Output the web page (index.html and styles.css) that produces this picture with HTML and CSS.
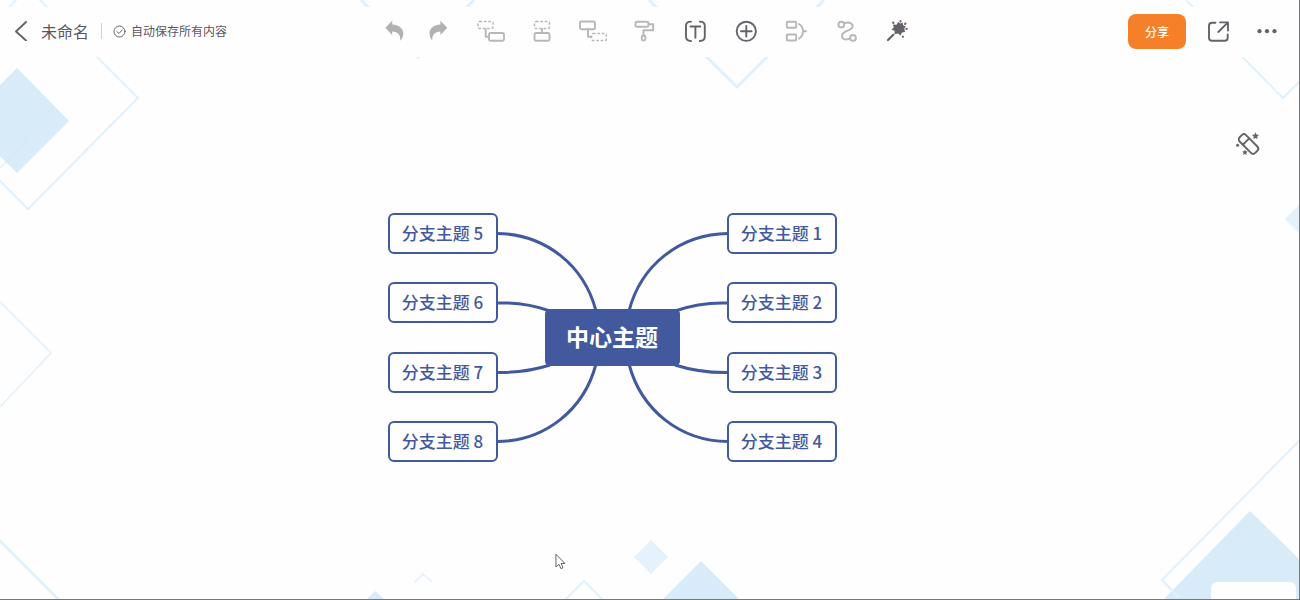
FILE: index.html
```html
<!DOCTYPE html>
<html lang="zh-CN">
<head>
<meta charset="utf-8">
<title>未命名</title>
<link rel="stylesheet" href="styles.css">
</head>
<body>
<div class="app">
  <svg class="backdrop" viewBox="0 0 1300 600" preserveAspectRatio="xMidYMid slice" aria-hidden="true">
    <g class="fill-strong">
      <path d="M17 68L69 121L17 173L-36 121Z"/>
      <path d="M1250 511L1300 560V600H1163Z"/>
      <path d="M701 561L740 600H662Z"/>
      <path d="M375 591L385 600H366Z"/>
    </g>
    <g class="fill-soft">
      <path d="M651 540L668 557L651 574L634 557Z"/>
      <path d="M1285 219L1300 204V234Z"/>
    </g>
    <g class="line">
      <path d="M-15 31L28 -12L138 98L28 209L-15 166"/>
      <path d="M1186 0L1283 98L1300 81"/>
      <path d="M1300 440L1162 580L1178 597"/>
      <path d="M564 601L584 581L604 601"/>
    </g>
    <g class="line thick">
      <path d="M649 0L737 87L824 0"/>
      <path d="M474 0L418 57L361 0"/>
      <path d="M-3 538L60 601"/>
    </g>
    <g class="line thin">
      <path d="M0 302L51 353L0 407"/>
      <path d="M415 582L423 574L432 582"/>
      <path d="M0 168L5 163"/>
    </g>
    <path class="line thin faint" d="M0 113L27 140L5 163"/>
  </svg>

  <header class="topbar">
    <div class="doc">
      <button class="back" aria-label="返回"><svg width="14" height="20" viewBox="0 0 14 20"><path class="s dark" d="M12 1L2 10.5L12 19.5"/></svg></button>
      <h1 class="title">未命名</h1>
      <span class="divider"></span>
      <p class="saved"><svg width="13" height="13" viewBox="0 0 13 13"><circle class="s dark fine" cx="6.500" cy="6.500" r="5.500"/><path class="s dark fine" d="M3.800 6.500L5.900 8.500L9.300 4.900"/></svg>自动保存所有内容</p>
    </div>

    <nav class="tools">
      <div class="history">
        <button class="tool" aria-label="撤销"><svg width="28" height="28" viewBox="0 0 28 28"><path class="f" d="M5.300 10.800L12.200 3.800V7.600C19.500 8 23.300 12 23.300 16.500C23.300 19.500 21.900 22 20.300 23.700C20.600 18 18 15 12.200 14.600V18Z"/></svg></button>
        <button class="tool" aria-label="重做"><svg width="28" height="28" viewBox="0 0 28 28"><path class="f" d="M23.300 10.800L16.400 3.800V7.600C9.100 8 5.500 12 5.500 16.500C5.500 19.500 6.700 22 8.300 23.700C8 18 10.600 15 16.400 14.600V18Z"/></svg></button>
      </div>
      <div class="actions">
        <button class="tool" aria-label="上级主题"><svg width="28" height="28" viewBox="0 0 28 28"><rect class="s dash" x="1" y="4.500" width="15" height="7" rx="1.500"/><path class="s" d="M8.700 12V19.800H12"/><rect class="s" x="12" y="16" width="15" height="7.700" rx="1.500"/></svg></button>
        <button class="tool" aria-label="父主题"><svg width="28" height="28" viewBox="0 0 28 28"><rect class="s dash" x="6.500" y="4.500" width="15" height="7" rx="1.500"/><path class="s" d="M14 12V16"/><rect class="s" x="6.500" y="16" width="15" height="7.700" rx="1.500"/></svg></button>
        <button class="tool" aria-label="子主题"><svg width="28" height="28" viewBox="0 0 28 28"><rect class="s" x="1" y="4.500" width="15" height="7.700" rx="1.500"/><path class="s" d="M9 12V19.800H12"/><rect class="s dash" x="12.500" y="16.500" width="15" height="7" rx="1.500"/></svg></button>
        <button class="tool" aria-label="格式刷"><svg width="28" height="28" viewBox="0 0 28 28"><rect class="s" x="5.500" y="4.700" width="13" height="5" rx="1.500"/><path class="s" d="M18.500 7.200H23.200V13.300H13.500V18.500"/><rect class="s" x="11.800" y="18.500" width="3.600" height="5" rx="1.500"/></svg></button>
        <button class="tool" aria-label="文本"><svg width="28" height="28" viewBox="0 0 28 28"><path class="s dark" d="M10 4.600Q5 4.600 5 9V19.500Q5 24 10 24M18.800 4.600Q23.800 4.600 23.800 9V19.500Q23.800 24 18.800 24M9.500 9.500H19.300M14.400 9.500V20.700"/></svg></button>
        <button class="tool" aria-label="插入"><svg width="28" height="28" viewBox="0 0 28 28"><circle class="s dark" cx="14.300" cy="14.300" r="9.600"/><path class="s dark" d="M9 14.300H19.600M14.300 9V19.600"/></svg></button>
        <button class="tool" aria-label="概要"><svg width="28" height="28" viewBox="0 0 28 28"><rect class="s" x="3.800" y="4.800" width="9.400" height="5.900" rx="1"/><rect class="s" x="3.800" y="17.500" width="9.400" height="6" rx="1"/><path class="s" d="M16 7Q20 9.500 20 14.300Q20 19 16 21.800M20 14.300H23"/></svg></button>
        <button class="tool" aria-label="关系线"><svg width="28" height="28" viewBox="0 0 28 28"><circle class="s" cx="7.300" cy="7.600" r="2.900"/><circle class="s" cx="19" cy="20.900" r="2.900"/><path class="s" d="M10 6.300C15 4.200 19.300 6.400 18.500 10C17.500 14 8.800 13.500 8 18.300C7.600 22.300 11.500 23.500 16 21.400"/></svg></button>
        <button class="tool" aria-label="美化"><svg width="28" height="28" viewBox="0 0 28 28"><path class="s dark bold" d="M3 23L8.300 17.700"/><path class="f dark" d="M13.300 4.800L15 6.500L17.500 5.500L18.200 8.200L20.800 9.500L19.200 12L20.200 15L17 15.500L15.500 18.500L13 16.500L9.500 17.200L9.700 14L6.500 12.500L8.800 10.500L8 7.500L11.500 7.800Z"/><path class="s dark" d="M8 5.500L8.500 6M15.500 3.900V4.500M20.500 6.500L20 7M21.300 12L21.800 11.800M17.800 19.400L18 19.900"/></svg></button>
      </div>
    </nav>

    <div class="side">
      <button class="share">分享</button>
      <button class="tool" aria-label="导出"><svg width="28" height="28" viewBox="0 0 28 28"><path class="s dark" d="M11.500 5.700H8Q5 5.700 5 8.700V20.800Q5 23.800 8 23.800H20.700Q23.700 23.800 23.700 20.800V17.500M16 5.400H24V13.500M24 5.400L14.300 15"/></svg></button>
      <button class="tool" aria-label="更多"><svg width="28" height="28" viewBox="0 0 28 28"><circle class="f dark" cx="9.500" cy="14.200" r="2.100"/><circle class="f dark" cx="17" cy="14.200" r="2.100"/><circle class="f dark" cx="24.500" cy="14.200" r="2.100"/></svg></button>
    </div>
  </header>

  <main class="canvas">
    <div class="map">
      <svg class="edges" width="449" height="249" viewBox="0 0 449 249" aria-hidden="true">
        <path d="M109 20.500C157 21 196 52 208 98M109 90Q137 89 162 98M109 159.500Q137 160 162 152M109 228.500C157 228 196 197 208 151"/>
        <path d="M340 20.500C292 21 253 52 241 98M340 90Q312 89 287 98M340 159.500Q312 160 287 152M340 228.500C292 228 253 197 241 151"/>
      </svg>
      <div class="node left r1">分支主题 5</div>
      <div class="node left r2">分支主题 6</div>
      <div class="node left r3">分支主题 7</div>
      <div class="node left r4">分支主题 8</div>
      <div class="node right r1">分支主题 1</div>
      <div class="node right r2">分支主题 2</div>
      <div class="node right r3">分支主题 3</div>
      <div class="node right r4">分支主题 4</div>
      <div class="root">中心主题</div>
    </div>
    <button class="beautify" aria-label="风格"><svg width="28" height="28" viewBox="0 0 28 28"><g transform="rotate(-45 14.500 14)"><rect class="s dark" x="10" y="3" width="9" height="22" rx="3"/><path class="s dark" d="M10 10.500H19"/></g><path class="f dark" d="M21.500 2.300L22.500 4.500L25 4.900L23.200 6.600L23.600 9L21.500 7.900L19.300 9L19.700 6.600L18 4.900L20.500 4.500ZM11 19.500L11.800 21.200L13.700 21.500L12.300 22.900L12.600 24.900L11 24L9.300 24.900L9.600 22.900L8.200 21.500L10.200 21.200Z"/><circle class="f dark" cx="3.600" cy="15.300" r="1.500"/></svg></button>
    <div class="dock"></div>
    <svg class="cursor" width="11" height="17" viewBox="0 0 12 18" aria-hidden="true"><path d="M1 1V15L4.200 12L6.500 16.800L8.700 15.800L6.700 11.200H10.800Z"/></svg>
  </main>
</div>
</body>
</html>
```
FILE: styles.css
```css
* { box-sizing: border-box; }

body {
  margin: 0;
  font-family: "Noto Sans CJK SC", sans-serif;
  color: #5a5560;
}

button {
  display: block;
  padding: 0;
  border: 0;
  background: none;
  font: inherit;
  cursor: pointer;
}

svg { display: block; }

.app {
  position: relative;
  display: flex;
  flex-direction: column;
  min-height: 100vh;
  overflow: hidden;
  padding-top: 7px;
  background: #fefefe;
  border-right: 1px solid #77777a;
  border-bottom: 1px solid #77777a;
}

/* decorative diamonds */
.backdrop {
  position: absolute;
  top: 0;
  left: 0;
  width: 100vw;
  height: 100vh;
}
.fill-strong { fill: #d8ebf9; }
.fill-soft { fill: #e3f2fc; }
.line { fill: none; stroke: #e0f1fc; stroke-width: 2; }
.thick { stroke-width: 3; }
.thin { stroke-width: 1.5; }
.faint { stroke: #d3e8f7; stroke-width: 1; }

/* top bar */
.topbar {
  position: relative;
  display: grid;
  grid-template-columns: 1fr auto 1fr;
  align-items: center;
  height: 50px;
  padding: 0 21px 2px 14px;
  background: #fefefe;
}

.doc { display: flex; align-items: center; }
.title {
  margin: 0 12px 0 13px;
  font-size: 16px;
  font-weight: 400;
  line-height: 24px;
}
.divider { width: 1px; height: 16px; background: #d5d3d7; }
.saved {
  display: flex;
  align-items: center;
  gap: 5px;
  margin: 0 0 0 11px;
  font-size: 12px;
  line-height: 18px;
  white-space: nowrap;
}

.tools { display: flex; gap: 25px; }
.history { display: flex; gap: 16px; }
.actions { display: flex; gap: 23px; }

.s {
  fill: none;
  stroke: #b9b6bb;
  stroke-width: 1.9;
  stroke-linecap: round;
  stroke-linejoin: round;
}
.f { fill: #b3b0b4; }
.dash { stroke-width: 1.5; stroke-dasharray: 2.6 1.8; stroke-linecap: butt; }
.s.dark { stroke: #67626a; }
.f.dark { fill: #67626a; }
.fine { stroke-width: 1; }
.bold { stroke-width: 2.2; }

.side {
  display: flex;
  align-items: center;
  justify-content: flex-end;
  gap: 18px;
}
.share {
  width: 58px;
  height: 35px;
  border-radius: 8px;
  background: #f67f2a;
  color: #fff;
  font-size: 12px;
  font-weight: 500;
}

/* mind map */
.canvas { flex: 1; }
.map {
  position: absolute;
  left: calc(50% - 262px);
  top: 213px;
  width: 449px;
  height: 249px;
}
.edges { position: absolute; inset: 0; fill: none; stroke: #42599e; stroke-width: 3; }

.node {
  position: absolute;
  width: 110px;
  height: 41px;
  border: 2px solid #42599e;
  border-radius: 6px;
  background: #fefefe;
  color: #42599e;
  font-size: 17px;
  font-weight: 500;
  line-height: 35px;
  text-align: center;
  white-space: nowrap;
}
.left { left: 0; }
.right { right: 0; }
.r1 { top: 0; }
.r2 { top: 69px; }
.r3 { top: 139px; }
.r4 { top: 208px; }

.root {
  position: absolute;
  left: 157px;
  top: 96px;
  width: 135px;
  height: 57px;
  border-radius: 5px;
  background: #42599e;
  color: #fff;
  font-size: 23px;
  font-weight: 700;
  line-height: 55px;
  text-align: center;
}

.beautify { position: absolute; right: 37px; top: 130px; }
.dock {
  position: absolute;
  right: 3px;
  bottom: 0;
  width: 85px;
  height: 17px;
  border-radius: 6px 6px 0 0;
  background: #fefefe;
}
.cursor { position: absolute; left: 555px; top: 553px; fill: #fff; stroke: #55535c; stroke-width: 1; }
```
